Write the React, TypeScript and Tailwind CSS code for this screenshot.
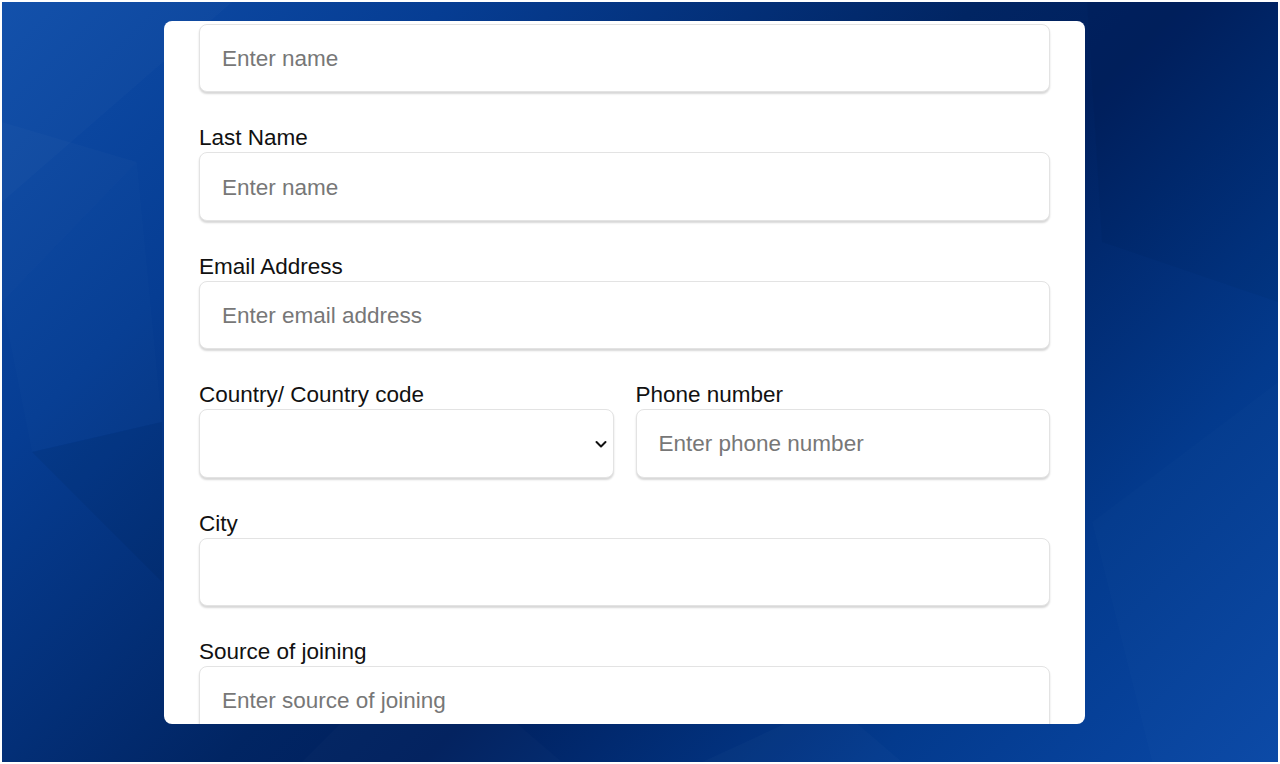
import React, { useLayoutEffect, useRef } from "react";

const font = { fontFamily: '"Liberation Sans", Arial, Helvetica, sans-serif' };

function Field({ label, placeholder }: { label: string; placeholder?: string }) {
  return (
    <div className="flex flex-col">
      <label className="text-[22.5px] leading-[25.9px] text-[#111111] mb-[1px]">{label}</label>
      <input
        className="h-[68.5px] w-full rounded-[8px] border border-[#e3e3e3] bg-white px-[22px] pt-[2px] text-[22.5px] text-[#222] outline-none shadow-[0_2px_2px_rgba(0,0,0,0.16)] placeholder:text-[#777777]"
        placeholder={placeholder}
        style={font}
      />
    </div>
  );
}

export default function App() {
  const ref = useRef<HTMLDivElement>(null);
  useLayoutEffect(() => {
    if (ref.current) ref.current.scrollTop = 59;
  }, []);

  return (
    <div className="h-[764px] w-[1280px] bg-white p-[2px] overflow-hidden" style={font}>
      <div className="relative h-full w-full overflow-hidden bg-[linear-gradient(135deg,#0f4eaa_0%,#063d93_22%,#012563_48%,#00205e_58%,#033a8d_80%,#0a48a6_100%)]">
        <svg className="absolute inset-0 h-full w-full" viewBox="0 0 1276 760" preserveAspectRatio="none">
          <polygon points="0,120 135,160 0,300" fill="#ffffff" opacity="0.018" />
          <polygon points="0,300 135,160 160,420 30,450" fill="#ffffff" opacity="0.012" />
          <polygon points="30,450 160,420 160,580" fill="#000000" opacity="0.05" />
          <polygon points="0,0 230,0 0,200" fill="#ffffff" opacity="0.02" />
          <polygon points="1085,0 1276,0 1276,300 1100,240" fill="#000000" opacity="0.03" />
          <polygon points="1090,520 1276,380 1276,760 1150,760" fill="#ffffff" opacity="0.012" />
          <polygon points="300,760 420,640 560,760" fill="#ffffff" opacity="0.015" />
          <polygon points="700,760 830,700 900,760" fill="#ffffff" opacity="0.018" />
        </svg>
        <div className="relative ml-[162px] mt-[19px] h-[703px] w-[921px] overflow-hidden rounded-[8px] bg-white">
          <div ref={ref} className="h-full w-full overflow-hidden">
            <div className="flex flex-col gap-[33px] px-[35px] pt-[35px] pb-[40px]">
              <Field label="First Name" placeholder="Enter name" />
              <Field label="Last Name" placeholder="Enter name" />
              <Field label="Email Address" placeholder="Enter email address" />
              <div className="grid grid-cols-2 gap-[22px]">
                <div className="flex flex-col">
                  <label className="text-[22.5px] leading-[25.9px] text-[#111111] mb-[1px]">Country/ Country code</label>
                  <div className="relative">
                    <select
                      className="h-[68.5px] w-full appearance-none rounded-[8px] border border-[#e3e3e3] bg-white px-[22px] text-[22.5px] text-[#222] outline-none shadow-[0_2px_2px_rgba(0,0,0,0.16)]"
                      style={font}
                      defaultValue=""
                    >
                      <option value=""></option>
                      <option value="us">United States (+1)</option>
                    </select>
                    <svg className="pointer-events-none absolute right-[6px] top-[30px] h-[10px] w-[14px]" viewBox="0 0 14 10">
                      <path d="M2.5 3 L7 7.5 L11.5 3" fill="none" stroke="#111" strokeWidth="2" strokeLinecap="round" strokeLinejoin="round" />
                    </svg>
                  </div>
                </div>
                <Field label="Phone number" placeholder="Enter phone number" />
              </div>
              <Field label="City" />
              <Field label="Source of joining" placeholder="Enter source of joining" />
              <button className="h-[56px] rounded-[8px] bg-[#0b3d91] text-[22px] text-white">Submit</button>
            </div>
          </div>
        </div>
      </div>
    </div>
  );
}
